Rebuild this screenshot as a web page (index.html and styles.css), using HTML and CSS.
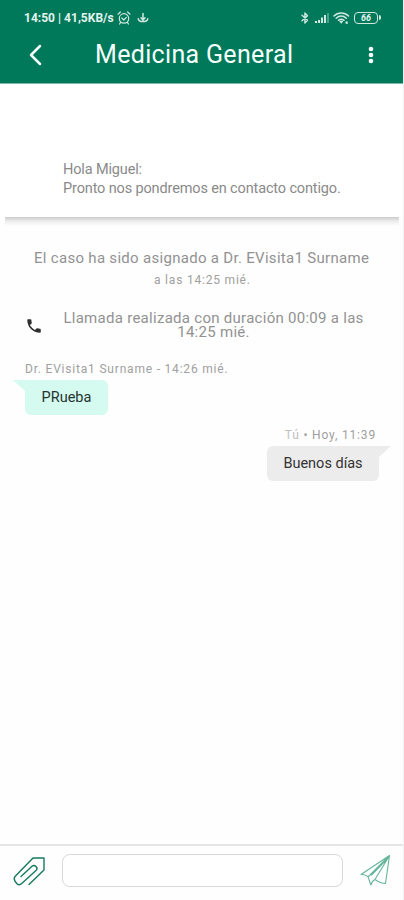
FILE: index.html
```html
<!DOCTYPE html>
<html lang="es">
<head>
<meta charset="utf-8">
<title>Medicina General</title>
<link rel="stylesheet" href="styles.css">
</head>
<body>
<div class="app">
  <header class="top">
    <div class="status">
      <span class="clock">14:50 | 41,5KB/s</span>
      <svg class="alarm" width="14" height="14" viewBox="0 0 14 14"><circle cx="7" cy="7.4" r="4.7"/><path d="M1 3.2 3.4 1M13 3.2 10.6 1M4.8 7 6.8 9l2.5-2.6M3.6 11.4 2.6 13M10.4 11.4l1 1.6"/></svg>
      <svg class="anchor" width="12" height="12" viewBox="0 0 12 12"><path d="M6 1.500V9M4 5.700 6 8l2-2.300M1.300 6.800c.5 3.600 8.900 3.600 9.400 0"/></svg>
      <span class="grow"></span>
      <svg class="bluetooth" width="10" height="14" viewBox="0 0 10 14"><path d="m2 4.300 5.500 5L4.900 12V2l2.600 2.700-5.500 5"/></svg>
      <svg class="signal" width="16" height="12" viewBox="0 0 16 12"><path d="M1 9h2v2H1zM4 8h2v3H4zM7 5.500h2V11H7zM10 3h2v8h-2z"/><path class="dim" d="M13 1h2v10h-2z"/></svg>
      <svg class="wifi" width="17" height="14" viewBox="0 0 17 14"><path d="M1 5c4-4 10.500-4 14.500 0M3.200 7.200c3-2.800 7.100-2.800 10.100 0M5.500 9.300c1.800-1.500 3.700-1.500 5.500 0"/><path class="solid" d="m8.200 12.800-2-2.600c1.300-.9 2.800-.9 4.100 0zM12.500 10.500h2.300v2.300h-2.300z"/></svg>
      <span class="battery">66</span>
    </div>
    <div class="bar">
      <svg class="back" width="14" height="22" viewBox="0 0 14 22"><path d="M12 2 3 11l9 9"/></svg>
      <h1>Medicina General</h1>
      <svg class="more" width="6" height="18" viewBox="0 0 6 18"><circle cx="3" cy="3" r="2.300"/><circle cx="3" cy="9" r="2.300"/><circle cx="3" cy="15" r="2.300"/></svg>
    </div>
  </header>
  <section class="notice">
    <p>Hola Miguel:</p>
    <p>Pronto nos pondremos en contacto contigo.</p>
  </section>
  <main class="chat">
    <p class="assigned">El caso ha sido asignado a Dr. EVisita1 Surname</p>
    <p class="assigned-time">a las 14:25 mié.</p>
    <div class="call">
      <svg width="18" height="18" viewBox="0 0 24 24"><path d="M6.620 10.790c1.440 2.830 3.760 5.140 6.590 6.590l2.200-2.200c.27-.27.670-.36 1.020-.24 1.120.37 2.330.57 3.570.57.550 0 1 .45 1 1V20c0 .55-.45 1-1 1C10.610 21 3 13.390 3 4c0-.55.45-1 1-1h3.500c.55 0 1 .45 1 1 0 1.250.2 2.450.57 3.570.11.35.03.740-.25 1.020z"/></svg>
      <p>Llamada realizada con duración 00:09 a las<br>14:25 mié.</p>
    </div>
    <p class="meta theirs">Dr. EVisita1 Surname - 14:26 mié.</p>
    <div class="bubble left">PRueba</div>
    <p class="meta mine"><span>Tú</span> • Hoy, 11:39</p>
    <div class="bubble right">Buenos días</div>
  </main>
  <footer class="composer">
    <svg class="clip" width="34" height="32" viewBox="0 0 34 32"><path d="M17 29.500 32 15V3H21L3 21.500c-1.200 1.500-1 3 0 4.700l2 2.500c1.500 1.500 3.500 1 5-.5L24.500 15c1-1.300.5-2.500-.5-3.500s-2.500-1.500-4-.2L9 21.500"/></svg>
    <input class="field" type="text" aria-label="Mensaje">
    <svg class="send" width="32" height="34" viewBox="0 0 32 34"><path d="M30.500 2.500 2 21.500c3 0 5.500.5 7 2.500 1.500 2.500 1.500 5.500 3 8 .5-2.500 2-4.500 4-5.500 3.500 2.500 6.500 4 10.500 4zM30.500 2.500 9 24M30.500 2.500 16 26.500M28 6 12.500 22"/></svg>
  </footer>
</div>
</body>
</html>
```
FILE: styles.css
```css
* { box-sizing: border-box; }
body { margin: 0; font-family: Roboto, "Liberation Sans", sans-serif; background: #fefefe; }
p, h1 { margin: 0; font-weight: 400; white-space: nowrap; }
svg { display: block; flex: none; fill: none; stroke-linecap: round; stroke-linejoin: round; }
.app { width: 404px; height: 900px; display: flex; flex-direction: column; overflow: hidden; border-right: 1px solid #f1f3f2; }
.top { height: 84px; flex: none; margin-right: -1px; background: #00785a; border-bottom: 1px solid #7ab9a8; }
.status { height: 26px; padding: 9px 23px 0 24px; display: flex; align-items: center; color: #e4f4ef; }
.clock { font-size: 12px; font-weight: 700; line-height: 16px; width: 91px; white-space: nowrap; letter-spacing: .02px; }
.grow { flex: 1; }
.status svg { stroke: #cfe9e1; stroke-width: 1.2; }
.alarm { margin-left: 2px; }
.status .anchor { margin-left: 6px; stroke-width: 1.5; }
.bluetooth { margin-right: 4px; }
.status .bluetooth { stroke-width: 1.4; }
.status .signal { fill: #cfe9e1; stroke: none; margin-right: 3px; }
.dim { opacity: .35; }
.status .solid { fill: #cfe9e1; stroke: none; }
.wifi { margin-right: 4px; }
.status .wifi { stroke-width: 1.5; }
.battery { position: relative; width: 24px; height: 12px; margin-right: 3px; border: 1.5px solid #cfe9e1; border-radius: 4px; font-size: 9px; font-weight: 700; font-style: italic; line-height: 10px; text-align: center; }
.battery::after { content: ""; position: absolute; right: -4px; top: 2px; width: 2px; height: 5px; background: #cfe9e1; border-radius: 0 2px 2px 0; }
.bar { height: 57px; display: flex; align-items: center; padding: 0 30px 0 28px; color: #f5fffc; }
.back { stroke: #f5fffc; stroke-width: 2.5; }
.bar h1 { flex: none; width: 198px; margin-left: 53px; font-size: 25px; line-height: 30px; letter-spacing: .33px; }
.more { fill: #f5fffc; margin-left: auto; }
.notice { position: relative; height: 133px; flex: none; padding: 76px 0 0 63px; background: #fff; color: #8a8a8a; font-size: 14.5px; line-height: 19px; font-weight: 300; letter-spacing: -.14px; }
.notice::after { content: ""; position: absolute; left: 5px; right: 4px; bottom: -9px; height: 9px; background: linear-gradient(#cbcbcb, #ececec 45%, #fefefe); }
.chat { flex: 1; display: flex; flex-direction: column; color: #929292; font-weight: 300; }
.assigned { margin: 31px 0 0 34px; font-size: 15px; line-height: 20px; letter-spacing: .3px; }
.assigned-time { margin: 4px 0 0 154px; font-size: 12px; line-height: 16px; letter-spacing: .8px; font-weight: 400; color: #a0a0a0; }
.call { display: flex; align-items: center; margin: 23px 0 0 25px; height: 28px; }
.call svg { fill: #303030; margin-top: 1px; }
.call p { width: 301px; margin-left: 20px; text-align: center; font-size: 15px; line-height: 14px; letter-spacing: .28px; }
.meta { font-size: 12px; line-height: 16px; letter-spacing: .8px; font-weight: 400; color: #a0a0a0; }
.theirs { margin: 22px 0 0 25px; }
.bubble { position: relative; height: 35px; font-size: 14.5px; line-height: 35px; font-weight: 400; text-align: center; }
.bubble::before { content: ""; position: absolute; top: 0; width: 13px; height: 12px; background: inherit; }
.left { width: 83px; margin: 3px 0 0 25px; background: #d5faef; border-radius: 0 6px 6px 6px; color: #26332f; }
.left::before { left: -12px; clip-path: polygon(0 0, 100% 0, 100% 100%); }
.mine { align-self: flex-end; margin: 12px 27px 0 0; letter-spacing: .83px; }
.mine span { color: #c0c0c0; }
.right { align-self: flex-end; width: 112px; margin: 3px 24px 0 0; background: #ececec; border-radius: 6px 0 6px 6px; color: #333; }
.right::before { right: -12px; clip-path: polygon(0 0, 100% 0, 0 100%); }
.composer { height: 56px; flex: none; display: flex; align-items: flex-start; padding: 9px 12px 0 12px; border-top: 2px solid #e5e5e5; }
.clip { stroke: #167a5d; stroke-width: 1.4; }
.field { width: 281px; height: 33px; margin: -1px 0 0 16px; padding: 0 10px; border: 1.5px solid #d9d9d9; border-radius: 8px; background: #fff; font: 15px Roboto, sans-serif; outline: 0; }
.send { margin: -2px 0 0 auto; stroke: #63b49a; stroke-width: 1.1; }
```
